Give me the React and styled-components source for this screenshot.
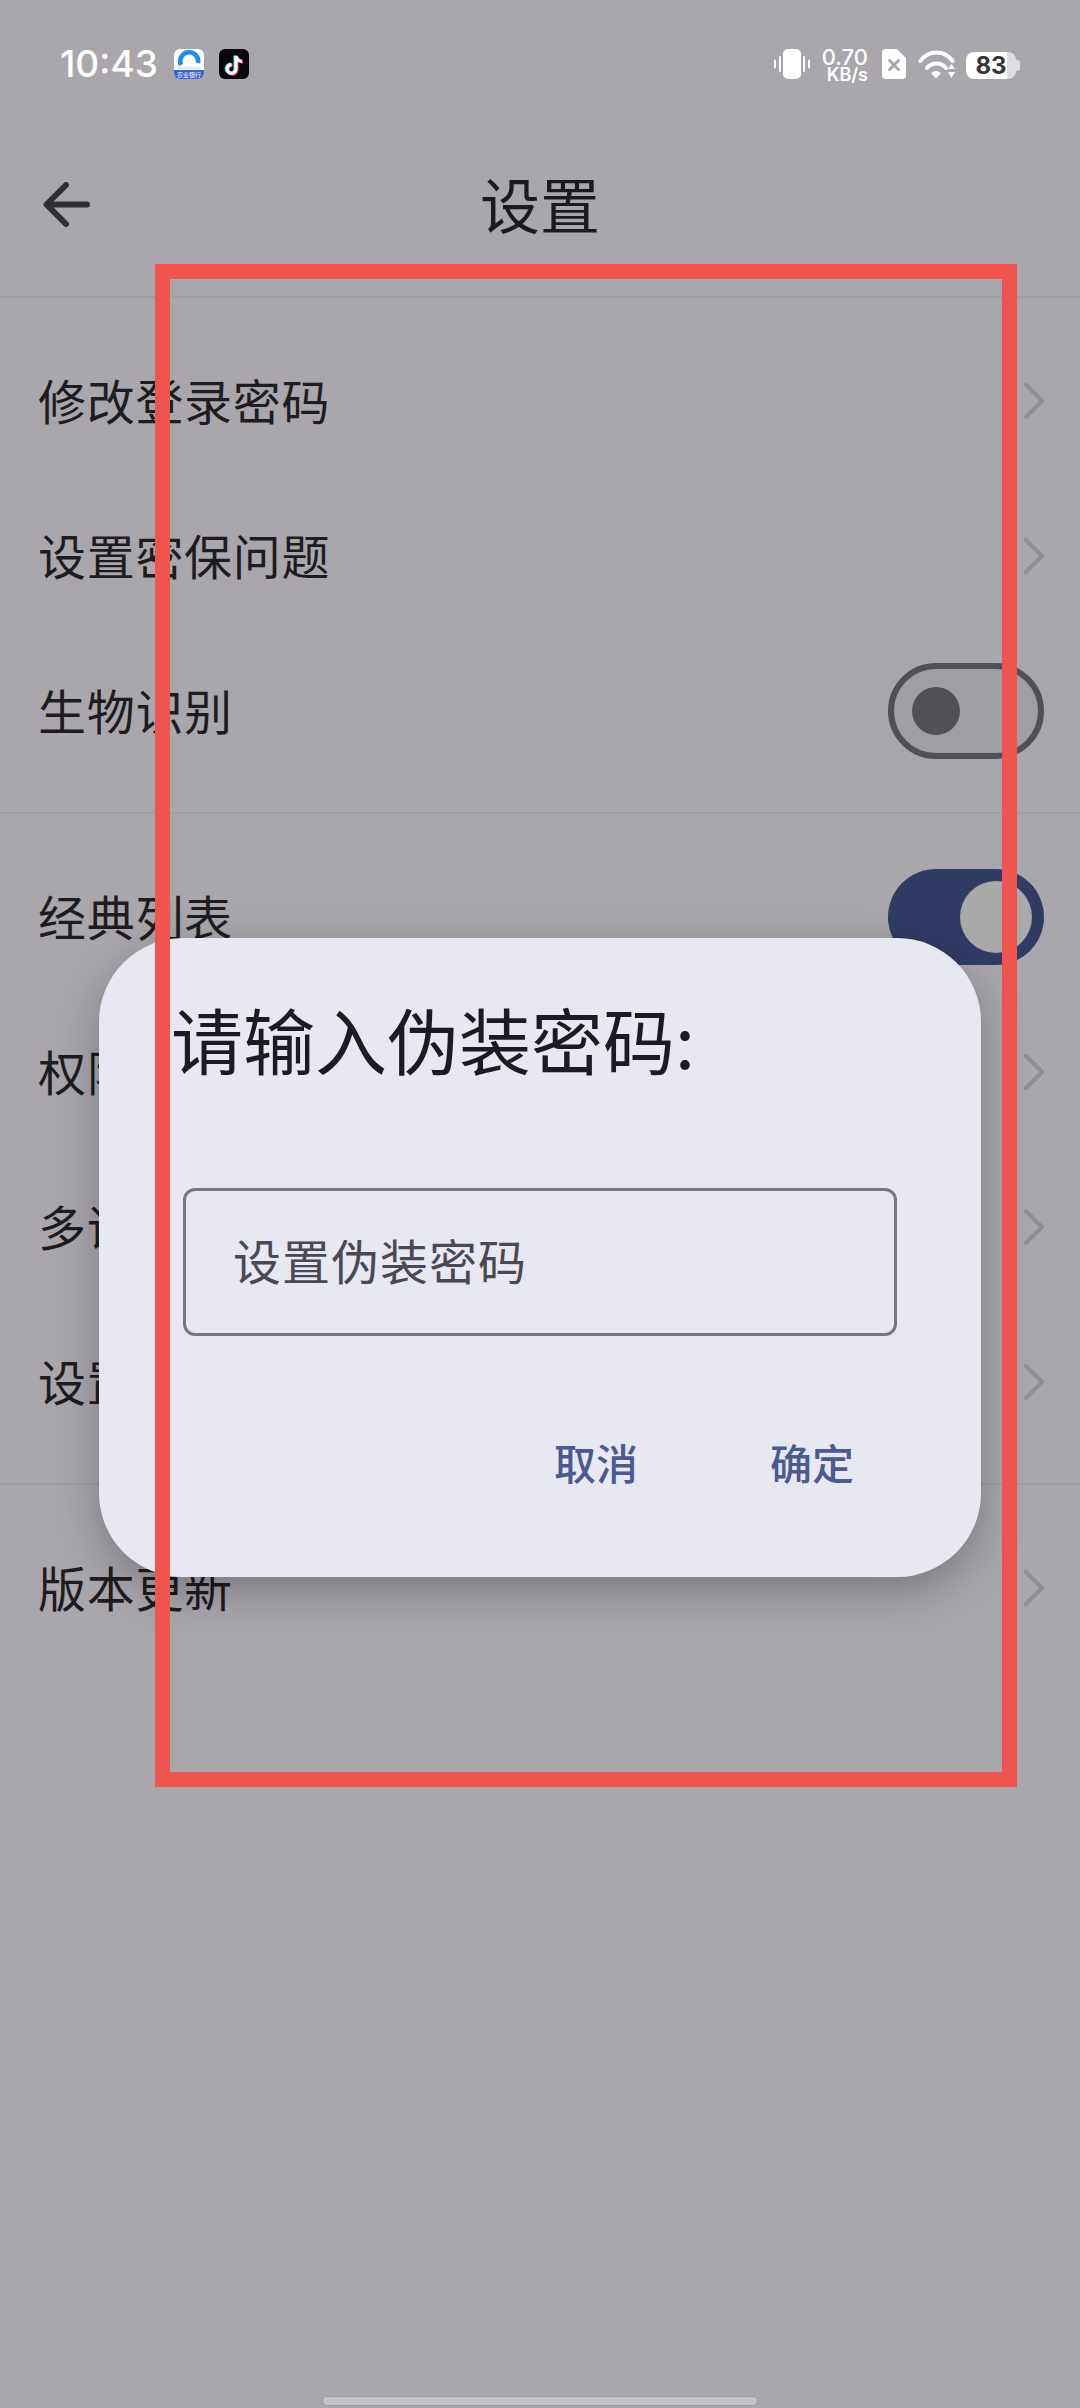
import React from 'react'
import styled, { createGlobalStyle } from 'styled-components'

const GlobalStyle = createGlobalStyle`
  html, body {
    margin: 0;
    padding: 0;
    background: #a9a7ac;
  }
  * {
    box-sizing: border-box;
  }
`

const CJK = `"Noto Sans CJK SC", "Noto Sans", sans-serif`

const Page = styled.div`
  position: relative;
  width: 1080px;
  height: 2408px;
  overflow: hidden;
  display: flex;
  flex-direction: column;
  background: #a9a7ac;
  font-family: ${CJK};
  color: #1d1c21;
`

const StatusBar = styled.div`
  height: 120px;
  padding: 48px 64px 0 60px;
  display: flex;
  justify-content: space-between;
  align-items: flex-start;
`

const StatusLeft = styled.div`
  display: flex;
  align-items: center;
  height: 32px;
`

const Clock = styled.span`
  font-family: Inter, sans-serif;
  font-weight: 500;
  font-size: 37px;
  line-height: 32px;
  color: #fff;
  width: 114px;
`

const AppBadge = styled.div`
  width: 30px;
  height: 30px;
  margin-right: 15px;
  border-radius: 6px;
  overflow: hidden;
  display: flex;
  flex-direction: column;
  background: ${p => p.$bg};
`

const BadgeArt = styled.svg`
  display: block;
  flex: 1;
`

const BadgeStrip = styled.span`
  height: 9px;
  background: #3a62d6;
  color: #fff;
  font-size: 6px;
  line-height: 9px;
  text-align: center;
  white-space: nowrap;
`

const StatusRight = styled.div`
  display: flex;
  align-items: center;
  height: 32px;
`

const StatusIcon = styled.svg`
  display: block;
  margin-left: ${p => p.$gap}px;
`

const Speed = styled.div`
  margin-left: 12px;
  width: 46px;
  display: flex;
  flex-direction: column;
  align-items: flex-end;
  font-family: Inter, sans-serif;
  color: #fff;
`

const SpeedValue = styled.span`
  font-size: 22px;
  font-weight: 500;
  line-height: 20px;
`

const SpeedUnit = styled.span`
  font-size: 18px;
  font-weight: 600;
  line-height: 15px;
`

const Battery = styled.div`
  position: relative;
  margin: 3px 0 0 11px;
  width: 50px;
  height: 27px;
  border-radius: 8px;
  background: linear-gradient(90deg, #fff 82%, #dddcdf 82%);
  color: #36363a;
  font-family: Inter, sans-serif;
  font-size: 24px;
  font-weight: 700;
  line-height: 27px;
  text-align: center;

  &::after {
    content: '';
    position: absolute;
    right: -4px;
    top: 8px;
    width: 4px;
    height: 11px;
    border-radius: 0 3px 3px 0;
    background: #dddcdf;
  }
`

const Header = styled.header`
  height: 178px;
  padding: 0 40px 8px 40px;
  display: grid;
  grid-template-columns: 1fr auto 1fr;
  align-items: center;
  border-bottom: 2px solid #a09ea3;
`

const BackIcon = styled.svg`
  display: block;
  margin: 0 0 0 3px;
`

const Title = styled.h1`
  margin: 0;
  padding-bottom: 2px;
  font-size: 60px;
  font-weight: 400;
  line-height: 80px;
  color: #1b1a1f;
`

const Section = styled.section`
  padding: 25px 0 24px;
  border-bottom: ${p => (p.$last ? 'none' : '2px solid #a09ea3')};
`

const Row = styled.div`
  height: 155px;
  padding: 0 36px 0 38px;
  display: flex;
  justify-content: space-between;
  align-items: center;
`

const RowLabel = styled.span`
  padding-bottom: 4px;
  font-size: 48px;
  line-height: 60px;
  letter-spacing: 0.7px;
`

const Switch = styled.div`
  width: 156px;
  height: 96px;
  border-radius: 48px;
  display: flex;
  align-items: center;
  justify-content: ${p => (p.$on ? 'flex-end' : 'flex-start')};
  padding: ${p => (p.$on ? '0 12px' : '0 18px')};
  background: ${p => (p.$on ? '#313c65' : '#9f9ea3')};
  border: ${p => (p.$on ? '0' : '6px solid #505056')};
`

const Knob = styled.span`
  display: block;
  width: ${p => (p.$on ? 72 : 48)}px;
  height: ${p => (p.$on ? 72 : 48)}px;
  border-radius: 50%;
  background: ${p => (p.$on ? '#a9a9a9' : '#505056')};
`

const HomeBar = styled.div`
  width: 436px;
  height: 10px;
  margin: auto auto 2px;
  border-radius: 5px;
  background: #c4c2c8;
  border: 1px solid #9c9a9f;
`

const Dialog = styled.div`
  position: absolute;
  left: 99px;
  top: 938px;
  width: 882px;
  height: 639px;
  padding: 56px 72px 0;
  border-radius: 84px;
  background: #e8e8f2;
  box-shadow: 0 14px 44px rgba(0, 0, 0, 0.28);
`

const DialogTitle = styled.h2`
  margin: 0 0 106px;
  font-size: 72px;
  font-weight: 400;
  line-height: 88px;
  white-space: nowrap;
  color: #1b1b23;
`

const PasswordField = styled.div`
  width: 714px;
  height: 148px;
  margin-left: 12px;
  padding: 0 0 6px 47px;
  display: flex;
  align-items: center;
  border: 3px solid #787680;
  border-radius: 12px;
  font-size: 48px;
  letter-spacing: 1px;
  color: #4a4953;
`

const Actions = styled.div`
  margin: 96px 55px 0 0;
  display: flex;
  justify-content: flex-end;
  gap: 132px;
`

const ActionButton = styled.button`
  padding: 0;
  border: 0;
  background: none;
  font-family: ${CJK};
  font-size: 42px;
  font-weight: 500;
  line-height: 60px;
  color: #4b5a8f;
`

const Highlight = styled.div`
  position: absolute;
  left: 155px;
  top: 264px;
  width: 862px;
  height: 1523px;
  border: 15px solid #f0544f;
  pointer-events: none;
`

function BankBadge() {
  return (
    <AppBadge $bg="#fff">
      <BadgeArt viewBox="0 0 30 21">
        <path d="M7 16 A9 9 0 1 1 24 14" fill="none" stroke="#1d8cf0" strokeWidth="4.5" />
        <path d="M3 19 H27" stroke="#e6f0fb" strokeWidth="3" />
      </BadgeArt>
      <BadgeStrip>农业银行</BadgeStrip>
    </AppBadge>
  )
}

function NoteBadge() {
  const stem = 'M17 7 V20 A4.4 4.4 0 1 1 12.6 15.6 M17 7 C17.6 10 19.6 12 23 12.4'
  return (
    <AppBadge $bg="#08070c">
      <BadgeArt viewBox="0 0 30 30">
        <path d={stem} transform="translate(-1 -0.6)" fill="none" stroke="#25e0e4" strokeWidth="3.2" />
        <path d={stem} transform="translate(1 0.8)" fill="none" stroke="#f0305c" strokeWidth="3.2" />
        <path d={stem} fill="none" stroke="#fff" strokeWidth="3.2" />
      </BadgeArt>
    </AppBadge>
  )
}

function VibrateIcon() {
  return (
    <StatusIcon width="36" height="30" viewBox="0 0 36 30" $gap={0}>
      <rect x="9" y="0" width="18" height="30" rx="5" fill="#fff" />
      <path d="M1 11.5 V18.5 M6 8 V22 M30 8 V22 M35 11.5 V18.5" stroke="#fff" strokeWidth="2" strokeLinecap="round" />
    </StatusIcon>
  )
}

function SimIcon() {
  return (
    <StatusIcon width="24" height="30" viewBox="0 0 24 30" $gap={14}>
      <path d="M4 0 H15 L24 9 V26 A4 4 0 0 1 20 30 H4 A4 4 0 0 1 0 26 V4 A4 4 0 0 1 4 0 Z" fill="#fff" />
      <path d="M7.5 11.5 L16.5 20.5 M16.5 11.5 L7.5 20.5" stroke="#a9a7ac" strokeWidth="3" strokeLinecap="round" />
    </StatusIcon>
  )
}

function WifiIcon() {
  return (
    <StatusIcon width="37" height="30" viewBox="0 0 37 30" $gap={12}>
      <g fill="none" stroke="#fff" strokeWidth="4" strokeLinecap="round">
        <path d="M2.5 12 C10 0.5 27 0.5 34.5 12" />
        <path d="M9 19 C14 13 23 13 28 19" />
      </g>
      <path d="M13 24 A8 8 0 0 1 23 24 L18 29.5 Z" fill="#fff" />
      <path d="M33.5 15 L37 20 H30 Z M30 23 H37 L33.5 29 Z" fill="#fff" />
    </StatusIcon>
  )
}

function Chevron() {
  return (
    <svg width="20" height="36" viewBox="0 0 20 36">
      <path d="M2 2 L18 18 L2 34" fill="none" stroke="#8f8e93" strokeWidth="4" strokeLinecap="round" strokeLinejoin="round" />
    </svg>
  )
}

function Toggle({ on }) {
  return (
    <Switch $on={on}>
      <Knob $on={on} />
    </Switch>
  )
}

const sections = [
  [
    { label: '修改登录密码' },
    { label: '设置密保问题' },
    { label: '生物识别', toggle: 'off' },
  ],
  [
    { label: '经典列表', toggle: 'on' },
    { label: '权限管理' },
    { label: '多语言设置' },
    { label: '设置伪装密码' },
  ],
  [{ label: '版本更新' }],
]

export default function App() {
  return (
    <Page>
      <GlobalStyle />
      <StatusBar>
        <StatusLeft>
          <Clock>10:43</Clock>
          <BankBadge />
          <NoteBadge />
        </StatusLeft>
        <StatusRight>
          <VibrateIcon />
          <Speed>
            <SpeedValue>0.70</SpeedValue>
            <SpeedUnit>KB/s</SpeedUnit>
          </Speed>
          <SimIcon />
          <WifiIcon />
          <Battery>83</Battery>
        </StatusRight>
      </StatusBar>

      <Header>
        <BackIcon width="47" height="45" viewBox="0 0 47 45">
          <path d="M44 22.5 H4 M23 3 L3.5 22.5 L23 42" fill="none" stroke="#2f2e34" strokeWidth="6" strokeLinecap="round" strokeLinejoin="round" />
        </BackIcon>
        <Title>设置</Title>
      </Header>

      {sections.map((rows, i) => (
        <Section key={i} $last={i === sections.length - 1}>
          {rows.map(row => (
            <Row key={row.label}>
              <RowLabel>{row.label}</RowLabel>
              {row.toggle ? <Toggle on={row.toggle === 'on'} /> : <Chevron />}
            </Row>
          ))}
        </Section>
      ))}

      <HomeBar />

      <Dialog>
        <DialogTitle>请输入伪装密码:</DialogTitle>
        <PasswordField>设置伪装密码</PasswordField>
        <Actions>
          <ActionButton>取消</ActionButton>
          <ActionButton>确定</ActionButton>
        </Actions>
      </Dialog>

      <Highlight />
    </Page>
  )
}
